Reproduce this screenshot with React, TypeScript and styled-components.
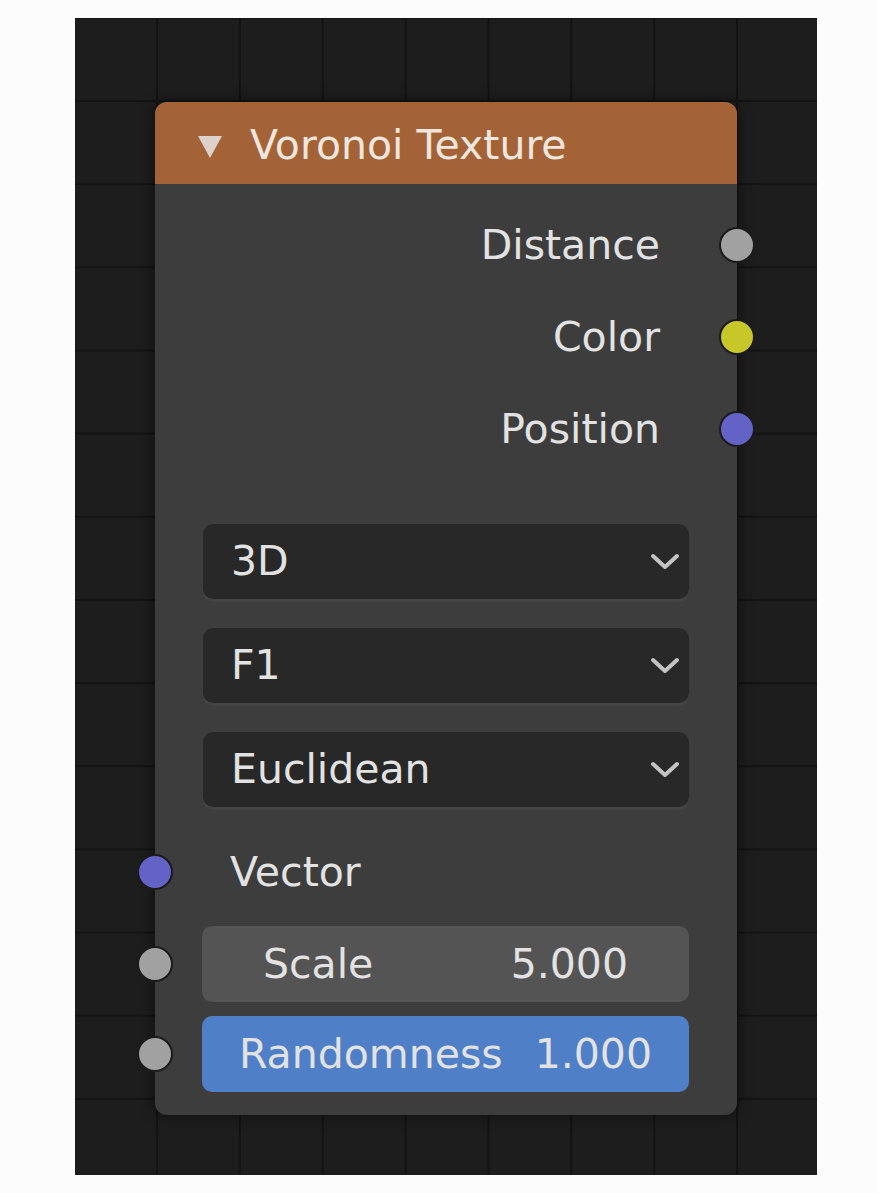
import React from 'react'
import styled, { createGlobalStyle } from 'styled-components'

const GlobalStyle = createGlobalStyle`
  body {
    margin: 0;
    background: #fcfcfc;
    font-family: 'DejaVu Sans', 'Liberation Sans', sans-serif;
  }
`

const SOCKET_COLORS = {
  float: '#a1a1a1',
  color: '#c7c729',
  vector: '#6363c7',
}

type SocketKind = keyof typeof SOCKET_COLORS

const outputs: { label: string; kind: SocketKind }[] = [
  { label: 'Distance', kind: 'float' },
  { label: 'Color', kind: 'color' },
  { label: 'Position', kind: 'vector' },
]

const menus = ['3D', 'F1', 'Euclidean']

const App = () => {
  return (
    <>
      <GlobalStyle />
      <Canvas>
        <Node>
          <Header>
            <Collapse />
            <Title>Voronoi Texture</Title>
          </Header>
          <Body>
            {outputs.map((o) => (
              <OutputRow key={o.label}>
                <Label>{o.label}</Label>
                <Socket $kind={o.kind} $side='right' />
              </OutputRow>
            ))}
            <Menus>
              {menus.map((m) => (
                <Dropdown key={m}>
                  <Label>{m}</Label>
                  <Chevron />
                </Dropdown>
              ))}
            </Menus>
            <VectorRow>
              <Socket $kind='vector' $side='left' />
              <Label>Vector</Label>
            </VectorRow>
            <FieldRow>
              <Socket $kind='float' $side='left' />
              <Field $inset={61}>
                <Label>Scale</Label>
                <Label>5.000</Label>
              </Field>
            </FieldRow>
            <FieldRow $gap={14}>
              <Socket $kind='float' $side='left' />
              <Field $inset={37} $active>
                <Label>Randomness</Label>
                <Label>1.000</Label>
              </Field>
            </FieldRow>
          </Body>
        </Node>
      </Canvas>
    </>
  )
}

const Chevron = () => (
  <svg width='30' height='18' viewBox='0 0 30 18'>
    <polyline
      points='3,3 15,14 27,3'
      fill='none'
      stroke='#c4c4c4'
      strokeWidth='4'
      strokeLinecap='round'
      strokeLinejoin='round'
    />
  </svg>
)

const Canvas = styled.div`
  width: 742px;
  height: 1157px;
  margin: 18px 0 0 75px;
  padding: 84px 0 0 80px;
  box-sizing: border-box;
  background-color: #1d1d1d;
  background-image: linear-gradient(to right, #131313 2px, transparent 2px),
    linear-gradient(to bottom, #131313 2px, transparent 2px);
  background-size: 82.86px 83.17px;
  background-position: 81px 82px;
`

const Node = styled.div`
  width: 582px;
  height: 1013px;
  border-radius: 12px;
  background: #3d3d3d;
  box-shadow: 0 0 14px rgba(0, 0, 0, 0.55);
  display: flex;
  flex-direction: column;
`

const Header = styled.div`
  height: 82px;
  flex: none;
  box-sizing: border-box;
  display: flex;
  align-items: center;
  padding: 5px 0 0 43px;
  gap: 28px;
  background: #a46337;
  border-radius: 12px 12px 0 0;
`

const Collapse = styled.span`
  width: 0;
  height: 0;
  border-left: 12px solid transparent;
  border-right: 12px solid transparent;
  border-top: 22px solid #ddd2cb;
  margin-top: 2px;
`

const Title = styled.span`
  font-size: 41px;
  color: #efe6df;
  line-height: 1;
`

const Body = styled.div`
  padding: 15px 0 23px;
  display: flex;
  flex-direction: column;
`

const Label = styled.span`
  font-size: 41px;
  line-height: 1;
  color: #e2e2e2;
  white-space: nowrap;
`

const OutputRow = styled.div`
  position: relative;
  height: 92px;
  display: flex;
  align-items: center;
  justify-content: flex-end;
  padding-right: 77px;
`

const Socket = styled.span<{ $kind: SocketKind; $side: 'left' | 'right' }>`
  position: absolute;
  top: 50%;
  ${(p) => p.$side}: -18px;
  transform: translateY(-50%);
  width: 32px;
  height: 32px;
  border-radius: 50%;
  background: ${(p) => SOCKET_COLORS[p.$kind]};
  border: 2px solid #1b1b1b;
`

const Menus = styled.div`
  margin: 49px 48px 0;
  display: flex;
  flex-direction: column;
  gap: 29px;
`

const Dropdown = styled.div`
  height: 75px;
  display: flex;
  align-items: center;
  justify-content: space-between;
  padding: 0 9px 0 28px;
  border-radius: 10px;
  background: #282828;
  box-shadow: 0 3px 0 rgba(255, 255, 255, 0.04);
`

const VectorRow = styled.div`
  position: relative;
  height: 84px;
  margin-top: 23px;
  display: flex;
  align-items: center;
  padding-left: 75px;
`

const FieldRow = styled.div<{ $gap?: number }>`
  position: relative;
  margin-top: ${(p) => p.$gap ?? 12}px;
  padding: 0 48px 0 47px;
`

const Field = styled.div<{ $inset: number; $active?: boolean }>`
  height: 76px;
  display: flex;
  align-items: center;
  justify-content: space-between;
  padding: 0 ${(p) => p.$inset}px;
  border-radius: 10px;
  background: ${(p) => (p.$active ? '#4f7fc7' : '#545454')};
`

export default App
